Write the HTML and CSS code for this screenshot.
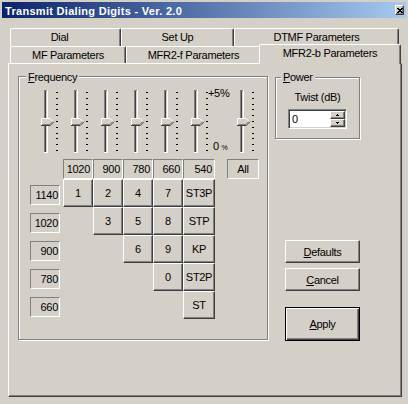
FILE: index.html
```html
<!DOCTYPE html>
<html>
<head>
<meta charset="utf-8">
<title>Transmit Dialing Digits</title>
<link rel="stylesheet" href="styles.css">
</head>
<body>
<svg class="defs" width="0" height="0" aria-hidden="true">
  <defs>
    <symbol id="slider" viewBox="0 0 24 66" shape-rendering="crispEdges">
      <rect x="10" y="2" width="1" height="62" fill="#808080"/>
      <rect x="10" y="2" width="4" height="1" fill="#808080"/>
      <rect x="11" y="3" width="1" height="61" fill="#404040"/>
      <rect x="13" y="2" width="1" height="63" fill="#ffffff"/>
      <rect x="10" y="64" width="4" height="1" fill="#ffffff"/>
      <rect x="22" y="4" width="2" height="1" fill="#000"/>
      <rect x="22" y="10" width="2" height="1" fill="#000"/>
      <rect x="22" y="16" width="2" height="1" fill="#000"/>
      <rect x="22" y="21" width="2" height="1" fill="#000"/>
      <rect x="22" y="27" width="2" height="1" fill="#000"/>
      <rect x="22" y="33" width="2" height="1" fill="#000"/>
      <rect x="22" y="39" width="2" height="1" fill="#000"/>
      <rect x="22" y="45" width="2" height="1" fill="#000"/>
      <rect x="22" y="50" width="2" height="1" fill="#000"/>
      <rect x="22" y="56" width="2" height="1" fill="#000"/>
      <rect x="22" y="62" width="2" height="1" fill="#000"/>
      <polygon points="7,30 16,30 20,34 16,38 7,38" fill="#D4D0C8" shape-rendering="auto"/>
      <polyline points="7.5,38 7.5,30.5 16,30.5 19.5,34" fill="none" stroke="#ffffff" stroke-width="1" shape-rendering="auto"/>
      <polyline points="7,37.5 16.2,37.5 20,33.7" fill="none" stroke="#404040" stroke-width="1" shape-rendering="auto"/>
      <polyline points="8,36.5 15.8,36.5 18.8,33.5" fill="none" stroke="#808080" stroke-width="1" shape-rendering="auto"/>
    </symbol>
  </defs>
</svg>
<div class="window">
  <div class="titlebar">
    <span class="title">Transmit Dialing Digits - Ver. 2.0</span>
    <span class="close"><svg width="6" height="5" viewBox="0 0 6 5" shape-rendering="crispEdges"><path d="M0 0h2v1h2V0h2v1H5v1H4v1h1v1h1v1H4V4H2v1H0V4h1V3h1V2H1V1H0z" fill="#000"/></svg></span>
  </div>
  <div class="tabs">
    <div class="tabrow row1">
      <div class="tab t-dial">Dial</div>
      <div class="tab t-setup">Set Up</div>
      <div class="tab t-dtmf">DTMF Parameters</div>
    </div>
    <div class="tabrow row2">
      <div class="tab t-mf">MF Parameters</div>
      <div class="tab t-mfr2f">MFR2-f Parameters</div>
      <div class="tab sel t-mfr2b">MFR2-b Parameters</div>
    </div>
  </div>
  <div class="panel">
    <div class="group freq">
      <div class="glabel"><u>F</u>requency</div>
      <div class="sliders">
        <svg class="sl" viewBox="0 0 30 66"><use href="#slider" width="24" height="66"/></svg>
        <svg class="sl" viewBox="0 0 30 66"><use href="#slider" width="24" height="66"/></svg>
        <svg class="sl" viewBox="0 0 30 66"><use href="#slider" width="24" height="66"/></svg>
        <svg class="sl" viewBox="0 0 30 66"><use href="#slider" width="24" height="66"/></svg>
        <svg class="sl" viewBox="0 0 30 66"><use href="#slider" width="24" height="66"/></svg>
        <svg class="sl" viewBox="0 0 30 66"><use href="#slider" width="24" height="66"/></svg>
        <div class="pctcol">
          <span class="pct-top">+5%</span>
          <span class="pct-bot">0 <span class="pct-small">%</span></span>
        </div>
        <svg class="sl" viewBox="0 0 30 66"><use href="#slider" width="24" height="66"/></svg>
      </div>
      <div class="grid">
        <div class="hdr c3 r1">1020</div>
        <div class="hdr c4 r1">900</div>
        <div class="hdr c5 r1">780</div>
        <div class="hdr c6 r1">660</div>
        <div class="hdr c7 r1">540</div>
        <div class="hdr hdr-all c9 r1">All</div>

        <div class="rl c1 r2">1140</div>
        <div class="rl c1 r3">1020</div>
        <div class="rl c1 r4">900</div>
        <div class="rl c1 r5">780</div>
        <div class="rl c1 r6">660</div>

        <div class="btn kb c3 r2">1</div>
        <div class="btn kb c4 r2">2</div>
        <div class="btn kb c5 r2">4</div>
        <div class="btn kb c6 r2">7</div>
        <div class="btn kb c7 r2">ST3P</div>

        <div class="btn kb c4 r3">3</div>
        <div class="btn kb c5 r3">5</div>
        <div class="btn kb c6 r3">8</div>
        <div class="btn kb c7 r3">STP</div>

        <div class="btn kb c5 r4">6</div>
        <div class="btn kb c6 r4">9</div>
        <div class="btn kb c7 r4">KP</div>

        <div class="btn kb c6 r5">0</div>
        <div class="btn kb c7 r5">ST2P</div>

        <div class="btn kb c7 r6">ST</div>
      </div>
    </div>
    <div class="side">
      <div class="group power">
        <div class="glabel"><u>P</u>ower</div>
        <div class="twist">Twist (dB)</div>
        <div class="edit">
          <span class="edit-text">0</span>
          <span class="spin">
            <span class="btn spinbtn"><svg width="3" height="2" viewBox="0 0 3 2" shape-rendering="crispEdges"><path d="M1 0h1v1h1v1H0V1h1z" fill="#000"/></svg></span>
            <span class="btn spinbtn"><svg width="3" height="2" viewBox="0 0 3 2" shape-rendering="crispEdges"><path d="M0 0h3v1H2v1H1V1H0z" fill="#000"/></svg></span>
          </span>
        </div>
      </div>
      <div class="btn push defaults"><span><u>D</u>efaults</span></div>
      <div class="btn push cancel"><span><u>C</u>ancel</span></div>
      <div class="btn push apply"><span><u>A</u>pply</span></div>
    </div>
  </div>
</div>
</body>
</html>
```

FILE: styles.css
```css
* { box-sizing: border-box; }
html, body { margin: 0; padding: 0; }
body {
  width: 408px;
  height: 404px;
  overflow: hidden;
  background: #D4D0C8;
  font-family: "Liberation Sans", Arial, sans-serif;
  font-size: 11px;
  letter-spacing: -0.3px;
  color: #000;
}
.defs { position: absolute; width: 0; height: 0; overflow: hidden; }

.window { padding: 2px 2px 0 2px; height: 404px; }

.titlebar {
  height: 16px;
  display: flex;
  align-items: center;
  justify-content: space-between;
  padding: 0 2px 0 3px;
  background: linear-gradient(to right, #0A246A, #A6CAF0);
}
.title {
  color: #fff;
  font-weight: bold;
  letter-spacing: 0.3px;
  line-height: 13px;
  padding-top: 2px;
  white-space: nowrap;
}
.close {
  width: 9px;
  height: 10px;
  background: #D4D0C8;
  border: 1px solid;
  border-color: #fff #404040 #404040 #fff;
  box-shadow: inset -1px -1px #808080;
  display: flex;
  align-items: center;
  justify-content: center;
}
.close svg { display: block; }

/* tabs */
.tabs { margin: 10px 0 0 8px; }
.tabrow { display: flex; }
.row1 { height: 18px; }
.row2 { height: 17px; align-items: flex-end; }
.tab {
  height: 18px;
  line-height: 16px;
  text-align: center;
  background: #D4D0C8;
  border-top: 1px solid #fff;
  border-left: 1px solid #fff;
  border-right: 1px solid #404040;
  box-shadow: inset -1px 0 #808080;
  border-radius: 2px 2px 0 0;
  white-space: nowrap;
}
.row2 .tab { height: 17px; }
.row2 .tab.sel {
  height: 20px;
  line-height: 17px;
  margin-left: -2px;
  margin-bottom: -1px;
  position: relative;
  z-index: 1;
}
.t-dial { width: 111px; padding-right: 12px; }
.t-setup { width: 113px; }
.t-dtmf { width: 165px; }
.t-mf { width: 116px; }
.t-mfr2f { width: 135px; }
.t-mfr2b { width: 142px; }

/* panel */
.panel {
  margin-left: 6px;
  width: 394px;
  height: 334px;
  border: 1px solid;
  border-color: #fff #404040 #404040 #fff;
  box-shadow: inset -1px -1px #808080;
  display: flex;
  align-items: flex-start;
  padding: 12px 0 0 9px;
}

.group {
  border: 1px solid #808080;
  box-shadow: inset 1px 1px #fff, 1px 1px #fff;
}
.glabel {
  width: max-content;
  background: #D4D0C8;
  padding: 0 2px;
  line-height: 13px;
  margin: -6px 0 0 7px;
}

.freq { width: 250px; height: 264px; }

.sliders {
  display: flex;
  margin: 4px 0 0 15px;
  height: 66px;
}
.sl { width: 30px; height: 66px; display: block; flex: none; }
.pctcol {
  width: 22px;
  margin-left: -6px;
  height: 66px;
  display: flex;
  flex-direction: column;
  justify-content: space-between;
  line-height: 11px;
  padding-bottom: 1px;
  white-space: nowrap;
  flex: none;
}
.pct-bot { padding-left: 5px; }
.pct-small { font-size: 7px; }

.grid {
  display: grid;
  grid-template-columns: 30px 3px 30px 30px 30px 30px 32px 12px 32px;
  grid-template-rows: 20px repeat(5, 28px);
  margin: 5px 0 0 11px;
}
.c1 { grid-column: 1; }
.c3 { grid-column: 3; }
.c4 { grid-column: 4; }
.c5 { grid-column: 5; }
.c6 { grid-column: 6; }
.c7 { grid-column: 7; }
.c9 { grid-column: 9; }
.r1 { grid-row: 1; }
.r2 { grid-row: 2; }
.r3 { grid-row: 3; }
.r4 { grid-row: 4; }
.r5 { grid-row: 5; }
.r6 { grid-row: 6; }

.hdr, .rl {
  border: 1px solid;
  border-color: #808080 #fff #fff #808080;
  text-align: right;
  padding-right: 2px;
  line-height: 18px;
  height: 20px;
}
.hdr-all { text-align: center; padding-right: 0; }
.rl { align-self: start; margin-top: 6px; padding-right: 1px; }

.btn {
  background: #D4D0C8;
  border: 1px solid;
  border-color: #fff #404040 #404040 #fff;
  box-shadow: inset -1px -1px #808080;
  display: flex;
  align-items: center;
  justify-content: center;
  white-space: nowrap;
}
.kb { padding-bottom: 1px; }

/* right side */
.side {
  margin-left: 7px;
  padding-top: 1px;
  width: 85px;
  display: flex;
  flex-direction: column;
}
.power { width: 85px; height: 62px; }
.power .glabel { margin: -7px 0 0 5px; }
.twist { text-align: center; margin-top: 7px; line-height: 13px; }
.edit {
  margin: 5px 0 0 12px;
  width: 59px;
  height: 20px;
  border: 1px solid;
  border-color: #808080 #fff #fff #808080;
  box-shadow: inset 1px 1px #404040, inset -1px -1px #D4D0C8;
  background: #fff;
  display: flex;
  padding: 1px;
}
.edit-text { flex: 1; line-height: 16px; padding-left: 2px; }
.spin { width: 15px; display: flex; flex-direction: column; }
.spinbtn { height: 8px; }
.spinbtn svg { display: block; }

.push { width: 75px; height: 23px; margin-left: 10px; }
.defaults { margin-top: 101px; }
.cancel { margin-top: 5px; }
.apply {
  margin-top: 16px;
  height: 34px;
  border: 1px solid #000;
  box-shadow: inset 1px 1px #fff, inset -1px -1px #404040, inset -2px -2px #808080;
}
```
